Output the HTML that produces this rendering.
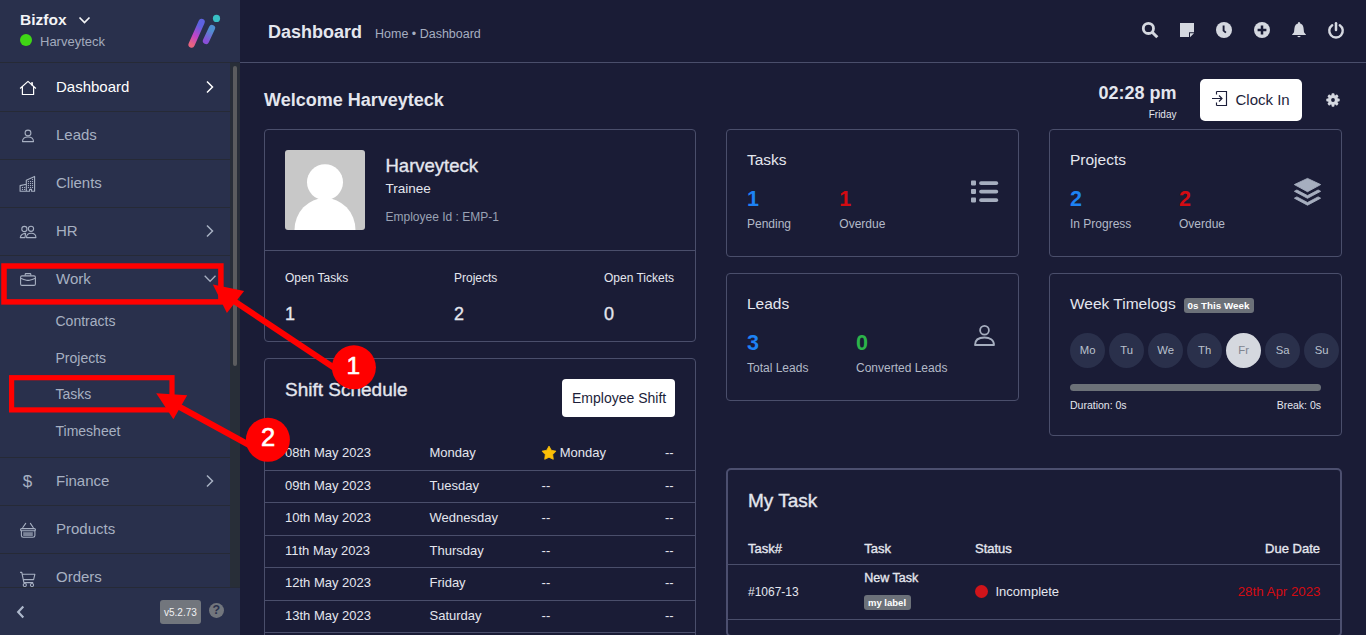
<!DOCTYPE html>
<html><head><meta charset="utf-8">
<style>
*{box-sizing:border-box;margin:0;padding:0}
html,body{width:1366px;height:635px;overflow:hidden;background:#1a1c36;font-family:"Liberation Sans",sans-serif}
.tx{position:absolute;line-height:1;white-space:pre}
.bx{position:absolute}
</style></head><body>
<div class="bx" style="left:0px;top:0px;width:240px;height:635px;background:#29304c"></div>
<div class="bx" style="left:0px;top:62px;width:240px;height:1px;background:#262a36"></div>
<div class="tx" style="left:20.00px;top:11.88px;font-size:15.5px;color:#f3f4f6;font-weight:bold;">Bizfox</div>
<svg class="bx" style="left:77.5px;top:16px" width="13" height="9" viewBox="0 0 13 9"><path d="M1.5 1.5 L6.5 6.5 L11.5 1.5" fill="none" stroke="#f3f4f6" stroke-width="1.7"/></svg>
<div class="bx" style="left:20px;top:33.8px;width:12px;height:12.0px;background:#3fd715;border-radius:50%"></div>
<div class="tx" style="left:40.00px;top:34.99px;font-size:13px;color:#a3abbd;font-weight:normal;">Harveyteck</div>
<svg class="bx" style="left:184px;top:12px" width="40" height="38" viewBox="0 0 40 38"><defs>
<linearGradient id="g1" x1="0" y1="1" x2="0.3" y2="0"><stop offset="0" stop-color="#e8647f"/><stop offset="0.45" stop-color="#c043c8"/><stop offset="1" stop-color="#5d62e0"/></linearGradient>
<linearGradient id="g2" x1="0" y1="1" x2="0.3" y2="0"><stop offset="0" stop-color="#8a4fd9"/><stop offset="1" stop-color="#4f8fd0"/></linearGradient></defs>
<line x1="7.6" y1="32.5" x2="17.6" y2="10" stroke="url(#g1)" stroke-width="6.3" stroke-linecap="round"/>
<line x1="22" y1="28.9" x2="28" y2="16" stroke="url(#g2)" stroke-width="6.3" stroke-linecap="round"/>
<circle cx="32.5" cy="6.4" r="3.6" fill="#38bfc4"/></svg>
<div class="bx" style="left:0px;top:111px;width:230px;height:1px;background:#262a36"></div>
<div class="bx" style="left:0px;top:159px;width:230px;height:1px;background:#262a36"></div>
<div class="bx" style="left:0px;top:207px;width:230px;height:1px;background:#262a36"></div>
<div class="bx" style="left:0px;top:255px;width:230px;height:1px;background:#262a36"></div>
<div class="bx" style="left:0px;top:457px;width:230px;height:1px;background:#262a36"></div>
<div class="bx" style="left:0px;top:505px;width:230px;height:1px;background:#262a36"></div>
<div class="bx" style="left:0px;top:553px;width:230px;height:1px;background:#262a36"></div>
<div class="tx" style="left:56.00px;top:79.30px;font-size:15px;color:#ffffff;font-weight:normal;">Dashboard</div>
<div class="tx" style="left:56.00px;top:127.30px;font-size:15px;color:#a7b0c2;font-weight:normal;">Leads</div>
<div class="tx" style="left:56.00px;top:175.30px;font-size:15px;color:#a7b0c2;font-weight:normal;">Clients</div>
<div class="tx" style="left:56.00px;top:223.30px;font-size:15px;color:#a7b0c2;font-weight:normal;">HR</div>
<div class="tx" style="left:56.00px;top:271.30px;font-size:15px;color:#a7b0c2;font-weight:normal;">Work</div>
<div class="tx" style="left:56.00px;top:473.30px;font-size:15px;color:#a7b0c2;font-weight:normal;">Finance</div>
<div class="tx" style="left:56.00px;top:521.30px;font-size:15px;color:#a7b0c2;font-weight:normal;">Products</div>
<div class="tx" style="left:56.00px;top:569.30px;font-size:15px;color:#a7b0c2;font-weight:normal;">Orders</div>
<div class="tx" style="left:55.50px;top:314.15px;font-size:14px;color:#a7b0c2;font-weight:normal;">Contracts</div>
<div class="tx" style="left:55.50px;top:351.15px;font-size:14px;color:#a7b0c2;font-weight:normal;">Projects</div>
<div class="tx" style="left:55.50px;top:387.15px;font-size:14px;color:#a7b0c2;font-weight:normal;">Tasks</div>
<div class="tx" style="left:55.50px;top:424.15px;font-size:14px;color:#a7b0c2;font-weight:normal;">Timesheet</div>
<svg class="bx" style="left:204px;top:79.5px" width="12" height="14" viewBox="0 0 12 14"><path d="M3 1.5 L8.5 7 L3 12.5" fill="none" stroke="#ffffff" stroke-width="1.5"/></svg>
<svg class="bx" style="left:204px;top:223.6px" width="12" height="14" viewBox="0 0 12 14"><path d="M3 1.5 L8.5 7 L3 12.5" fill="none" stroke="#a7b0c2" stroke-width="1.5"/></svg>
<svg class="bx" style="left:204px;top:473.6px" width="12" height="14" viewBox="0 0 12 14"><path d="M3 1.5 L8.5 7 L3 12.5" fill="none" stroke="#a7b0c2" stroke-width="1.5"/></svg>
<svg class="bx" style="left:202px;top:273px" width="16" height="11" viewBox="0 0 16 11"><path d="M2.7 2.8 L8.1 8.3 L13.5 2.8" fill="none" stroke="#a7b0c2" stroke-width="1.3"/></svg>
<svg class="bx" style="left:19px;top:79px" width="18" height="18" viewBox="0 0 18 18"><path d="M1.1 9.5 L9 2.4 L16.9 9.5 M3.4 7.8 V15.5 H14.6 V7.8" fill="none" stroke="#ffffff" stroke-width="1.2" stroke-linejoin="round"/><rect x="12.2" y="3.2" width="1.7" height="3.2" fill="#ffffff"/></svg>
<svg class="bx" style="left:20px;top:128px" width="16" height="16" viewBox="0 0 16 16"><circle cx="8" cy="5" r="2.9" fill="none" stroke="#a7b0c2" stroke-width="1.1"/><path d="M2.5 13.6 C2.5 10 5 9 8 9 C11 9 13.5 10 13.5 13.6 Z" fill="none" stroke="#a7b0c2" stroke-width="1.1" stroke-linejoin="round"/></svg>
<svg class="bx" style="left:19px;top:175px" width="17" height="18" viewBox="0 0 17 18"><path d="M1.1 16.3 V10.6 L7.3 9.2 V16.3 Z M7.3 16.3 V5.2 L15.6 1.4 V16.3 H12.6 V14.4 H10.6 V16.3 Z" fill="none" stroke="#a7b0c2" stroke-width="1.1" stroke-linejoin="round"/><g fill="#a7b0c2"><rect x="2.95" y="11.95" width="1.1" height="1.1"/><rect x="5.05" y="11.95" width="1.1" height="1.1"/><rect x="2.95" y="13.95" width="1.1" height="1.1"/><rect x="5.05" y="13.95" width="1.1" height="1.1"/><rect x="12.95" y="3.85" width="1.1" height="1.1"/><rect x="8.85" y="5.95" width="1.1" height="1.1"/><rect x="8.85" y="7.95" width="1.1" height="1.1"/><rect x="8.85" y="9.95" width="1.1" height="1.1"/><rect x="8.85" y="11.95" width="1.1" height="1.1"/><rect x="10.95" y="5.95" width="1.1" height="1.1"/><rect x="10.95" y="7.95" width="1.1" height="1.1"/><rect x="10.95" y="9.95" width="1.1" height="1.1"/><rect x="10.95" y="11.95" width="1.1" height="1.1"/><rect x="12.95" y="5.95" width="1.1" height="1.1"/><rect x="12.95" y="7.95" width="1.1" height="1.1"/><rect x="12.95" y="9.95" width="1.1" height="1.1"/><rect x="12.95" y="11.95" width="1.1" height="1.1"/></g></svg>
<svg class="bx" style="left:19px;top:223px" width="18" height="17" viewBox="0 0 18 17"><circle cx="5.4" cy="6" r="2.6" fill="none" stroke="#a7b0c2" stroke-width="1.1"/><circle cx="12" cy="5.8" r="2.6" fill="none" stroke="#a7b0c2" stroke-width="1.1"/><path d="M1.3 14.6 Q1.8 10.8 6.6 10.4 L6 14.6 Z M7.5 14.6 C7.5 11.5 10 10.3 12.2 10.3 C14.4 10.3 16.9 11.5 16.9 14.6 Z" fill="none" stroke="#a7b0c2" stroke-width="1.1" stroke-linejoin="round"/></svg>
<svg class="bx" style="left:19px;top:272px" width="18" height="16" viewBox="0 0 18 16"><rect x="1.6" y="3.9" width="14.8" height="9.5" rx="1.4" fill="none" stroke="#a7b0c2" stroke-width="1.1"/><path d="M6.2 3.6 V2.3 Q6.2 1.6 6.9 1.6 H11.1 Q11.8 1.6 11.8 2.3 V3.6 M1.6 6.2 Q5 7.5 7.5 8.2 Q9 8.6 10.5 8.2 Q13 7.5 16.4 6.2" fill="none" stroke="#a7b0c2" stroke-width="1.1"/></svg>
<div class="tx" style="left:22.80px;top:473.11px;font-size:17px;color:#a7b0c2;font-weight:normal;">$</div>
<svg class="bx" style="left:19px;top:521px" width="18" height="18" viewBox="0 0 18 18"><rect x="1.6" y="7.6" width="14.8" height="2.1" rx="1" fill="none" stroke="#a7b0c2" stroke-width="1.1"/><path d="M3.8 6.5 L6.7 2.4 M14.2 6.5 L11.4 2.4" stroke="#a7b0c2" stroke-width="1.1" stroke-linecap="round"/><path d="M2.4 9.7 V14.5 Q2.4 16.2 4.2 16.2 H14 Q15.9 16.2 15.9 14.5 V9.7" fill="none" stroke="#a7b0c2" stroke-width="1.1"/><rect x="4.2" y="11.2" width="9.6" height="3.9" fill="#a7b0c2" opacity="0.65"/></svg>
<svg class="bx" style="left:19px;top:570px" width="18" height="18" viewBox="0 0 18 18"><path d="M1.1 2.4 H2.8 L4.9 12.6 H14.2 M3.4 4.2 H15.9 L14.6 9.6 H4.4" fill="none" stroke="#a7b0c2" stroke-width="1.1" stroke-linejoin="round"/><circle cx="5.8" cy="15.1" r="1.6" fill="none" stroke="#a7b0c2" stroke-width="1.1"/><circle cx="13" cy="15.1" r="1.6" fill="none" stroke="#a7b0c2" stroke-width="1.1"/></svg>
<div class="bx" style="left:230px;top:63px;width:10px;height:524px;background:#282e38"></div>
<div class="bx" style="left:233px;top:66px;width:4px;height:300px;background:#5b5c5e;border-radius:2px"></div>
<div class="bx" style="left:0px;top:587px;width:240px;height:1px;background:#262a36"></div>
<svg class="bx" style="left:15px;top:604px" width="12" height="16" viewBox="0 0 12 16"><path d="M8.3 2.6 L3.2 8 L8.3 13.4" fill="none" stroke="#adb8cc" stroke-width="2.2"/></svg>
<div class="bx" style="left:160px;top:600px;width:41px;height:24px;background:#72767d;border-radius:3px"></div>
<div class="tx" style="left:164.00px;top:607.53px;font-size:10px;color:#f0f1f3;font-weight:normal;">v5.2.73</div>
<div class="bx" style="left:208.8px;top:603px;width:14.799999999999983px;height:14.799999999999955px;background:#72767d;border-radius:50%"></div>
<div class="tx" style="left:212.40px;top:604.22px;font-size:12.5px;color:#29304c;font-weight:bold;">?</div>
<div class="bx" style="left:240px;top:62px;width:1126px;height:1px;background:#4a4e6b"></div>
<div class="tx" style="left:268.00px;top:22.76px;font-size:18px;color:#e4e6ee;font-weight:bold;">Dashboard</div>
<div class="tx" style="left:375.00px;top:28.12px;font-size:12.5px;color:#a6aec0;font-weight:normal;">Home • Dashboard</div>
<svg class="bx" style="left:1141px;top:21px" width="18" height="18" viewBox="0 0 18 18"><circle cx="7.4" cy="7.4" r="5.1" fill="none" stroke="#d5d8e0" stroke-width="2.8"/><path d="M11 11 L16.3 16.3" stroke="#d5d8e0" stroke-width="3"/></svg>
<svg class="bx" style="left:1180px;top:23px" width="15" height="15" viewBox="0 0 15 15"><path d="M0 0 H14 V9.2 H9 V14 H0 Z" fill="#d5d8e0"/><path d="M10 10.2 H14 L10 14.2 Z" fill="#d5d8e0"/></svg>
<svg class="bx" style="left:1216px;top:22px" width="16" height="16" viewBox="0 0 16 16"><circle cx="8" cy="8" r="8" fill="#d5d8e0"/><path d="M7.6 3.6 V8.6 L9.9 10.6" fill="none" stroke="#1a1c36" stroke-width="1.9"/></svg>
<svg class="bx" style="left:1254px;top:22px" width="16" height="16" viewBox="0 0 16 16"><circle cx="8" cy="8" r="8" fill="#d5d8e0"/><path d="M8 3.6 V12.4 M3.6 8 H12.4" stroke="#1a1c36" stroke-width="2.5"/></svg>
<svg class="bx" style="left:1291px;top:21px" width="16" height="18" viewBox="0 0 16 18"><path d="M8 2.3 C5.2 2.3 3.6 4.6 3.4 7.6 L3 11.2 L1 13.8 V14.1 H15 V13.8 L13 11.2 L12.6 7.6 C12.4 4.6 10.8 2.3 8 2.3 Z" fill="#d5d8e0"/><rect x="7" y="0.9" width="2" height="2.6" rx="1" fill="#d5d8e0"/><path d="M6.2 15.1 H9.8 Q8 17.6 6.2 15.1 Z" fill="#d5d8e0"/></svg>
<svg class="bx" style="left:1327px;top:21px" width="18" height="18" viewBox="0 0 18 18"><path d="M5.2 4.2 A6.75 6.75 0 1 0 12.8 4.2" fill="none" stroke="#d5d8e0" stroke-width="2.4" stroke-linecap="round"/><path d="M9 2.2 V9" stroke="#d5d8e0" stroke-width="2.5" stroke-linecap="round"/></svg>
<div class="tx" style="left:264.00px;top:90.76px;font-size:18px;color:#e4e6ee;font-weight:bold;">Welcome Harveyteck</div>
<div class="tx" style="right:189.50px;top:83.56px;font-size:18px;color:#e4e6ee;font-weight:bold;text-align:right;">02:28 pm</div>
<div class="tx" style="right:189.50px;top:109.63px;font-size:10px;color:#e4e6ee;font-weight:normal;text-align:right;">Friday</div>
<div class="bx" style="left:1200px;top:79px;width:102px;height:42px;background:#ffffff;border-radius:5px"></div>
<svg class="bx" style="left:1211px;top:90px" width="18" height="18" viewBox="0 0 18 18"><path d="M5.5 1.5 H15.5 V15.5 H5.5 M5.5 1.5 V4.5 M5.5 15.5 V12.5" fill="none" stroke="#1c1e3a" stroke-width="1.15"/><path d="M1 8.5 H11 M8 5.5 L11 8.5 L8 11.5" fill="none" stroke="#1c1e3a" stroke-width="1.15"/></svg>
<div class="tx" style="left:1235.50px;top:91.90px;font-size:15px;color:#1c1e3a;font-weight:normal;">Clock In</div>
<svg class="bx" style="left:1326px;top:93px" width="15" height="15" viewBox="0 0 15 15"><g transform="translate(7 7)"><circle r="5" fill="#d5d8e0"/><g fill="#d5d8e0"><rect x="-1.45" y="-6.7" width="2.9" height="3.2" rx="0.9" transform="rotate(0)"/><rect x="-1.45" y="-6.7" width="2.9" height="3.2" rx="0.9" transform="rotate(45)"/><rect x="-1.45" y="-6.7" width="2.9" height="3.2" rx="0.9" transform="rotate(90)"/><rect x="-1.45" y="-6.7" width="2.9" height="3.2" rx="0.9" transform="rotate(135)"/><rect x="-1.45" y="-6.7" width="2.9" height="3.2" rx="0.9" transform="rotate(180)"/><rect x="-1.45" y="-6.7" width="2.9" height="3.2" rx="0.9" transform="rotate(225)"/><rect x="-1.45" y="-6.7" width="2.9" height="3.2" rx="0.9" transform="rotate(270)"/><rect x="-1.45" y="-6.7" width="2.9" height="3.2" rx="0.9" transform="rotate(315)"/></g><circle r="1.9" fill="#1a1c36"/></g></svg>
<div class="bx" style="left:264px;top:129px;width:432px;height:213px;border:1px solid #4a4e6b;border-radius:4px"></div>
<div class="bx" style="left:285px;top:150px;width:80px;height:80px;background:#c8c8c8;border-radius:3px;overflow:hidden"></div>
<svg class="bx" style="left:285px;top:150px" width="80" height="80" viewBox="0 0 80 80"><circle cx="40" cy="32.2" r="18" fill="#ffffff"/><ellipse cx="40" cy="80" rx="30.5" ry="32" fill="#ffffff"/></svg>
<div class="tx" style="left:385.50px;top:157.34px;font-size:18.5px;color:#e4e6ee;font-weight:normal;-webkit-text-stroke:0.35px #e4e6ee;">Harveyteck</div>
<div class="tx" style="left:385.50px;top:181.77px;font-size:13.5px;color:#e4e6ee;font-weight:normal;">Trainee</div>
<div class="tx" style="left:385.50px;top:211.04px;font-size:12px;color:#9aa2b4;font-weight:normal;">Employee Id : EMP-1</div>
<div class="bx" style="left:265px;top:250px;width:430px;height:1px;background:#4a4e6b"></div>
<div class="tx" style="left:285.00px;top:272.34px;font-size:12px;color:#e4e6ee;font-weight:normal;">Open Tasks</div>
<div class="tx" style="left:454.00px;top:272.34px;font-size:12px;color:#e4e6ee;font-weight:normal;">Projects</div>
<div class="tx" style="left:604.00px;top:272.34px;font-size:12px;color:#e4e6ee;font-weight:normal;">Open Tickets</div>
<div class="tx" style="left:285.00px;top:304.76px;font-size:18px;color:#e4e6ee;font-weight:normal;-webkit-text-stroke:0.35px #e4e6ee;">1</div>
<div class="tx" style="left:454.00px;top:304.76px;font-size:18px;color:#e4e6ee;font-weight:normal;-webkit-text-stroke:0.35px #e4e6ee;">2</div>
<div class="tx" style="left:604.00px;top:304.76px;font-size:18px;color:#e4e6ee;font-weight:normal;-webkit-text-stroke:0.35px #e4e6ee;">0</div>
<div class="bx" style="left:264px;top:358px;width:432px;height:302px;border:1px solid #4a4e6b;border-radius:4px"></div>
<div class="tx" style="left:285.00px;top:379.61px;font-size:19px;color:#e4e6ee;font-weight:normal;-webkit-text-stroke:0.35px #e4e6ee;">Shift Schedule</div>
<div class="bx" style="left:562px;top:379px;width:113px;height:38px;background:#ffffff;border-radius:4px"></div>
<div class="tx" style="left:572.00px;top:391.15px;font-size:14px;color:#1c1e3a;font-weight:normal;">Employee Shift</div>
<div class="tx" style="left:285.00px;top:446.19px;font-size:13px;color:#e4e6ee;font-weight:normal;">08th May 2023</div>
<div class="tx" style="left:429.50px;top:446.19px;font-size:13px;color:#e4e6ee;font-weight:normal;">Monday</div>
<svg class="bx" style="left:540.5px;top:445px" width="16" height="16" viewBox="0 0 16 16"><polygon points="8.00,1.10 10.29,5.24 14.94,6.14 11.71,9.61 12.29,14.31 8.00,12.30 3.71,14.31 4.29,9.61 1.06,6.14 5.71,5.24" fill="#fcbf06" stroke="#fcbf06" stroke-width="0.8" stroke-linejoin="round"/></svg>
<div class="tx" style="left:559.70px;top:446.19px;font-size:13px;color:#e4e6ee;font-weight:normal;">Monday</div>
<div class="tx" style="left:665.00px;top:446.19px;font-size:13px;color:#e4e6ee;font-weight:normal;">--</div>
<div class="tx" style="left:285.00px;top:478.69px;font-size:13px;color:#e4e6ee;font-weight:normal;">09th May 2023</div>
<div class="tx" style="left:429.50px;top:478.69px;font-size:13px;color:#e4e6ee;font-weight:normal;">Tuesday</div>
<div class="tx" style="left:541.60px;top:478.69px;font-size:13px;color:#e4e6ee;font-weight:normal;">--</div>
<div class="tx" style="left:665.00px;top:478.69px;font-size:13px;color:#e4e6ee;font-weight:normal;">--</div>
<div class="tx" style="left:285.00px;top:511.19px;font-size:13px;color:#e4e6ee;font-weight:normal;">10th May 2023</div>
<div class="tx" style="left:429.50px;top:511.19px;font-size:13px;color:#e4e6ee;font-weight:normal;">Wednesday</div>
<div class="tx" style="left:541.60px;top:511.19px;font-size:13px;color:#e4e6ee;font-weight:normal;">--</div>
<div class="tx" style="left:665.00px;top:511.19px;font-size:13px;color:#e4e6ee;font-weight:normal;">--</div>
<div class="tx" style="left:285.00px;top:543.69px;font-size:13px;color:#e4e6ee;font-weight:normal;">11th May 2023</div>
<div class="tx" style="left:429.50px;top:543.69px;font-size:13px;color:#e4e6ee;font-weight:normal;">Thursday</div>
<div class="tx" style="left:541.60px;top:543.69px;font-size:13px;color:#e4e6ee;font-weight:normal;">--</div>
<div class="tx" style="left:665.00px;top:543.69px;font-size:13px;color:#e4e6ee;font-weight:normal;">--</div>
<div class="tx" style="left:285.00px;top:576.19px;font-size:13px;color:#e4e6ee;font-weight:normal;">12th May 2023</div>
<div class="tx" style="left:429.50px;top:576.19px;font-size:13px;color:#e4e6ee;font-weight:normal;">Friday</div>
<div class="tx" style="left:541.60px;top:576.19px;font-size:13px;color:#e4e6ee;font-weight:normal;">--</div>
<div class="tx" style="left:665.00px;top:576.19px;font-size:13px;color:#e4e6ee;font-weight:normal;">--</div>
<div class="tx" style="left:285.00px;top:608.69px;font-size:13px;color:#e4e6ee;font-weight:normal;">13th May 2023</div>
<div class="tx" style="left:429.50px;top:608.69px;font-size:13px;color:#e4e6ee;font-weight:normal;">Saturday</div>
<div class="tx" style="left:541.60px;top:608.69px;font-size:13px;color:#e4e6ee;font-weight:normal;">--</div>
<div class="tx" style="left:665.00px;top:608.69px;font-size:13px;color:#e4e6ee;font-weight:normal;">--</div>
<div class="bx" style="left:265px;top:470px;width:430px;height:1px;background:#4a4e6b"></div>
<div class="bx" style="left:265px;top:502px;width:430px;height:1px;background:#4a4e6b"></div>
<div class="bx" style="left:265px;top:535px;width:430px;height:1px;background:#4a4e6b"></div>
<div class="bx" style="left:265px;top:567px;width:430px;height:1px;background:#4a4e6b"></div>
<div class="bx" style="left:265px;top:600px;width:430px;height:1px;background:#4a4e6b"></div>
<div class="bx" style="left:265px;top:632px;width:430px;height:1px;background:#4a4e6b"></div>
<div class="bx" style="left:726px;top:129px;width:293px;height:128px;border:1px solid #4a4e6b;border-radius:4px"></div>
<div class="tx" style="left:747.00px;top:152.28px;font-size:15.5px;color:#e4e6ee;font-weight:normal;">Tasks</div>
<div class="tx" style="left:747.00px;top:189.30px;font-size:21.5px;color:#1d82f5;font-weight:bold;">1</div>
<div class="tx" style="left:839.30px;top:189.30px;font-size:21.5px;color:#d30b12;font-weight:bold;">1</div>
<div class="tx" style="left:747.00px;top:218.04px;font-size:12px;color:#b3bac8;font-weight:normal;">Pending</div>
<div class="tx" style="left:839.30px;top:218.04px;font-size:12px;color:#b3bac8;font-weight:normal;">Overdue</div>
<svg class="bx" style="left:970px;top:179px" width="30" height="25" viewBox="0 0 30 25"><g fill="#a6aebf"><rect x="1" y="1.4" width="5" height="5" rx="0.8"/><rect x="1" y="9.9" width="5" height="5" rx="0.8"/><rect x="1" y="18.4" width="5" height="5" rx="0.8"/><rect x="9.2" y="2.3" width="19" height="3.7" rx="1.8"/><rect x="9.2" y="10.8" width="19" height="3.7" rx="1.8"/><rect x="9.2" y="19.3" width="19" height="3.7" rx="1.8"/></g></svg>
<div class="bx" style="left:1049px;top:129px;width:293px;height:128px;border:1px solid #4a4e6b;border-radius:4px"></div>
<div class="tx" style="left:1070.00px;top:152.48px;font-size:15.5px;color:#e4e6ee;font-weight:normal;">Projects</div>
<div class="tx" style="left:1070.00px;top:189.30px;font-size:21.5px;color:#1d82f5;font-weight:bold;">2</div>
<div class="tx" style="left:1179.00px;top:189.30px;font-size:21.5px;color:#d30b12;font-weight:bold;">2</div>
<div class="tx" style="left:1070.00px;top:218.14px;font-size:12px;color:#b3bac8;font-weight:normal;">In Progress</div>
<div class="tx" style="left:1179.00px;top:218.14px;font-size:12px;color:#b3bac8;font-weight:normal;">Overdue</div>
<svg class="bx" style="left:1293px;top:177px" width="30" height="30" viewBox="0 0 30 30"><g fill="#a6aebf" stroke="#a6aebf" stroke-width="0.9" stroke-linejoin="round"><path d="M1.4 7.6 L14.5 1.4 L27.6 7.6 L14.5 14.7 Z"/><path d="M1.4 14.3 L3.9 13 L14.5 18.6 L25.1 13 L27.6 14.3 L14.5 21.3 Z"/><path d="M1.4 21.2 L3.9 19.9 L14.5 25.5 L25.1 19.9 L27.6 21.2 L14.5 28.2 Z"/></g></svg>
<div class="bx" style="left:726px;top:273px;width:293px;height:128px;border:1px solid #4a4e6b;border-radius:4px"></div>
<div class="tx" style="left:747.00px;top:295.88px;font-size:15.5px;color:#e4e6ee;font-weight:normal;">Leads</div>
<div class="tx" style="left:747.00px;top:333.20px;font-size:21.5px;color:#1d82f5;font-weight:bold;">3</div>
<div class="tx" style="left:856.00px;top:333.20px;font-size:21.5px;color:#2cb34a;font-weight:bold;">0</div>
<div class="tx" style="left:747.00px;top:362.34px;font-size:12px;color:#b3bac8;font-weight:normal;">Total Leads</div>
<div class="tx" style="left:856.00px;top:362.34px;font-size:12px;color:#b3bac8;font-weight:normal;">Converted Leads</div>
<svg class="bx" style="left:972px;top:323px" width="25" height="25" viewBox="0 0 25 25"><circle cx="12.5" cy="7.2" r="4.4" fill="none" stroke="#a6aebf" stroke-width="1.8"/><path d="M3 22 C3 16.5 7.5 14.5 12.5 14.5 C17.5 14.5 22 16.5 22 22 Z" fill="none" stroke="#a6aebf" stroke-width="1.8" stroke-linejoin="round"/></svg>
<div class="bx" style="left:1049px;top:273px;width:293px;height:163px;border:1px solid #4a4e6b;border-radius:4px"></div>
<div class="tx" style="left:1070.00px;top:296.38px;font-size:15.5px;color:#e4e6ee;font-weight:normal;">Week Timelogs</div>
<div class="bx" style="left:1184px;top:298px;width:70px;height:15px;background:#6c7179;border-radius:3px"></div>
<div class="tx" style="left:1187.50px;top:301.00px;font-size:9.8px;color:#ffffff;font-weight:bold;">0s This Week</div>
<div class="bx" style="left:1070.1px;top:332.5px;width:35.0px;height:35.0px;background:#2a304b;border-radius:50%"></div>
<div class="tx" style="left:1067.6px;width:40px;text-align:center;top:345.03px;font-size:11.3px;color:#b9c0cd">Mo</div>
<div class="bx" style="left:1109.1px;top:332.5px;width:35.0px;height:35.0px;background:#2a304b;border-radius:50%"></div>
<div class="tx" style="left:1106.6px;width:40px;text-align:center;top:345.03px;font-size:11.3px;color:#b9c0cd">Tu</div>
<div class="bx" style="left:1148.1px;top:332.5px;width:35.0px;height:35.0px;background:#2a304b;border-radius:50%"></div>
<div class="tx" style="left:1145.6px;width:40px;text-align:center;top:345.03px;font-size:11.3px;color:#b9c0cd">We</div>
<div class="bx" style="left:1187.1px;top:332.5px;width:35.0px;height:35.0px;background:#2a304b;border-radius:50%"></div>
<div class="tx" style="left:1184.6px;width:40px;text-align:center;top:345.03px;font-size:11.3px;color:#b9c0cd">Th</div>
<div class="bx" style="left:1226.1px;top:332.5px;width:35.0px;height:35.0px;background:#d5d8df;border-radius:50%"></div>
<div class="tx" style="left:1223.6px;width:40px;text-align:center;top:345.03px;font-size:11.3px;color:#7f848f">Fr</div>
<div class="bx" style="left:1265.1px;top:332.5px;width:35.0px;height:35.0px;background:#2a304b;border-radius:50%"></div>
<div class="tx" style="left:1262.6px;width:40px;text-align:center;top:345.03px;font-size:11.3px;color:#b9c0cd">Sa</div>
<div class="bx" style="left:1304.1px;top:332.5px;width:35.0px;height:35.0px;background:#2a304b;border-radius:50%"></div>
<div class="tx" style="left:1301.6px;width:40px;text-align:center;top:345.03px;font-size:11.3px;color:#b9c0cd">Su</div>
<div class="bx" style="left:1070px;top:384px;width:251px;height:7px;background:#6c7178;border-radius:4px"></div>
<div class="tx" style="left:1070.00px;top:400.11px;font-size:10.5px;color:#e4e6ee;font-weight:normal;">Duration: 0s</div>
<div class="tx" style="right:45.00px;top:400.11px;font-size:10.5px;color:#e4e6ee;font-weight:normal;text-align:right;">Break: 0s</div>
<div class="bx" style="left:726px;top:468px;width:616px;height:169px;border:2px solid #4c4f6f;border-radius:5px"></div>
<div class="tx" style="left:748.00px;top:491.41px;font-size:19px;color:#e4e6ee;font-weight:normal;-webkit-text-stroke:0.35px #e4e6ee;">My Task</div>
<div class="tx" style="left:748.00px;top:542.29px;font-size:13px;color:#e4e6ee;font-weight:normal;-webkit-text-stroke:0.35px #e4e6ee;">Task#</div>
<div class="tx" style="left:864.30px;top:542.29px;font-size:13px;color:#e4e6ee;font-weight:normal;-webkit-text-stroke:0.35px #e4e6ee;">Task</div>
<div class="tx" style="left:975.00px;top:542.29px;font-size:13px;color:#e4e6ee;font-weight:normal;-webkit-text-stroke:0.35px #e4e6ee;">Status</div>
<div class="tx" style="right:46.00px;top:542.29px;font-size:13px;color:#e4e6ee;font-weight:normal;text-align:right;-webkit-text-stroke:0.35px #e4e6ee;">Due Date</div>
<div class="bx" style="left:728px;top:564px;width:612px;height:1px;background:#4a4e6b"></div>
<div class="tx" style="left:748.00px;top:585.74px;font-size:12px;color:#e4e6ee;font-weight:normal;">#1067-13</div>
<div class="tx" style="left:864.30px;top:571.62px;font-size:12.5px;color:#e4e6ee;font-weight:normal;-webkit-text-stroke:0.35px #e4e6ee;">New Task</div>
<div class="bx" style="left:864px;top:595px;width:47px;height:15px;background:#6c7179;border-radius:3px"></div>
<div class="tx" style="left:868.00px;top:597.56px;font-size:9.5px;color:#ffffff;font-weight:bold;">my label</div>
<div class="bx" style="left:975px;top:585px;width:13px;height:13px;background:#d0141a;border-radius:50%"></div>
<div class="tx" style="left:995.50px;top:584.99px;font-size:13px;color:#e4e6ee;font-weight:normal;">Incomplete</div>
<div class="tx" style="right:45.50px;top:584.74px;font-size:13.3px;color:#d30b12;font-weight:normal;text-align:right;">28th Apr 2023</div>
<div class="bx" style="left:728px;top:619px;width:612px;height:1px;background:#4a4e6b"></div>
<svg class="bx" style="left:0;top:0" width="1366" height="635" viewBox="0 0 1366 635">
<rect x="4" y="266" width="216.9" height="35.9" fill="none" stroke="#ff0000" stroke-width="5.5"/>
<rect x="11.6" y="377.7" width="160.4" height="32.2" fill="none" stroke="#ff0000" stroke-width="5.2"/>
<line x1="222" y1="293" x2="345" y2="375" stroke="#ff0000" stroke-width="6"/>
<polygon points="212.9,284.6 244.1,290.9 226.9,312.9" fill="#ff0000"/>
<line x1="166" y1="399.5" x2="262" y2="452" stroke="#ff0000" stroke-width="6"/>
<polygon points="156.2,393.3 187.2,395.2 173.4,419.3" fill="#ff0000"/>
<circle cx="353.9" cy="367.3" r="22" fill="#ff0000"/>
<circle cx="267.9" cy="439.8" r="22" fill="#ff0000"/>
</svg>
<div class="tx" style="left:346.50px;top:354.06px;font-size:24.5px;color:#ffffff;font-weight:normal;-webkit-text-stroke:0.6px #fff;">1</div>
<div class="tx" style="left:261.00px;top:424.81px;font-size:25.5px;color:#ffffff;font-weight:normal;-webkit-text-stroke:0.6px #fff;">2</div>
</body></html>
